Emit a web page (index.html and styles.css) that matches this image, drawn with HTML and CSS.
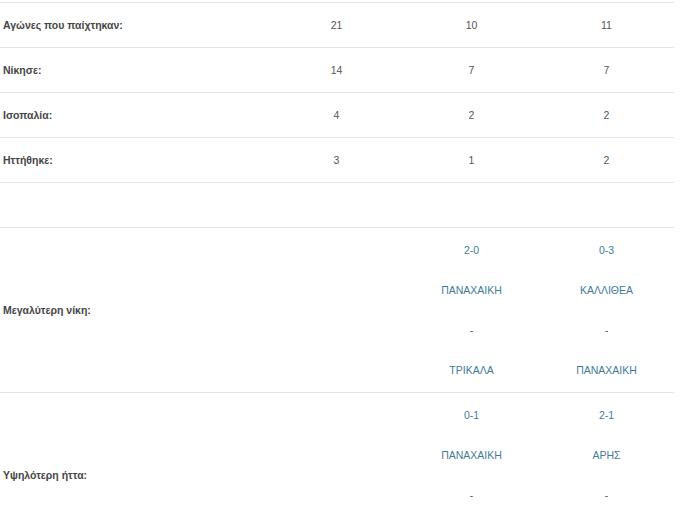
FILE: index.html
```html
<!DOCTYPE html>
<html lang="el">
<head>
<meta charset="utf-8">
<link rel="stylesheet" href="styles.css">
</head>
<body>
<table class="stats">
  <tbody>
    <tr>
      <td class="label">Αγώνες που παίχτηκαν:</td>
      <td class="val">21</td>
      <td class="val">10</td>
      <td class="val">11</td>
    </tr>
    <tr>
      <td class="label">Νίκησε:</td>
      <td class="val">14</td>
      <td class="val">7</td>
      <td class="val">7</td>
    </tr>
    <tr>
      <td class="label">Ισοπαλία:</td>
      <td class="val">4</td>
      <td class="val">2</td>
      <td class="val">2</td>
    </tr>
    <tr>
      <td class="label">Ηττήθηκε:</td>
      <td class="val">3</td>
      <td class="val">1</td>
      <td class="val">2</td>
    </tr>
    <tr>
      <td class="label">&nbsp;</td>
      <td class="val"></td>
      <td class="val"></td>
      <td class="val"></td>
    </tr>
    <tr>
      <td class="label">Μεγαλύτερη νίκη:</td>
      <td class="val"></td>
      <td class="val">
        <a class="item" href="#">2-0</a>
        <a class="item" href="#">ΠΑΝΑΧΑΙΚΗ</a>
        <span class="item">-</span>
        <a class="item" href="#">ΤΡΙΚΑΛΑ</a>
      </td>
      <td class="val">
        <a class="item" href="#">0-3</a>
        <a class="item" href="#">ΚΑΛΛΙΘΕΑ</a>
        <span class="item">-</span>
        <a class="item" href="#">ΠΑΝΑΧΑΙΚΗ</a>
      </td>
    </tr>
    <tr>
      <td class="label">Υψηλότερη ήττα:</td>
      <td class="val"></td>
      <td class="val">
        <a class="item" href="#">0-1</a>
        <a class="item" href="#">ΠΑΝΑΧΑΙΚΗ</a>
        <span class="item">-</span>
        <a class="item" href="#">ΠΑΝΑΧΑΙΚΗ</a>
      </td>
      <td class="val">
        <a class="item" href="#">2-1</a>
        <a class="item" href="#">ΑΡΗΣ</a>
        <span class="item">-</span>
        <a class="item" href="#">ΠΑΝΑΧΑΙΚΗ</a>
      </td>
    </tr>
  </tbody>
</table>
</body>
</html>
```

FILE: styles.css
```css
html, body {
  margin: 0;
  padding: 0;
  background: #ffffff;
}

body {
  font-family: "Liberation Sans", Arial, sans-serif;
  font-size: 10.5px;
  color: #555555;
  padding-top: 2px;
}

.stats {
  width: 674px;
  border-collapse: collapse;
  table-layout: fixed;
}

.stats td {
  border-top: 1px solid #e3e3e3;
  padding: 15px 3px 14px;
  line-height: 15px;
  vertical-align: middle;
}

.stats .label {
  width: 263px;
  font-weight: bold;
  color: #454545;
  text-align: left;
}

.stats .val {
  text-align: center;
  color: #555555;
}

.item {
  display: block;
  line-height: 15px;
  margin-bottom: 25px;
  color: #427b98;
  text-decoration: none;
}

.item:last-child {
  margin-bottom: 0;
}

span.item {
  color: #555555;
}
```
